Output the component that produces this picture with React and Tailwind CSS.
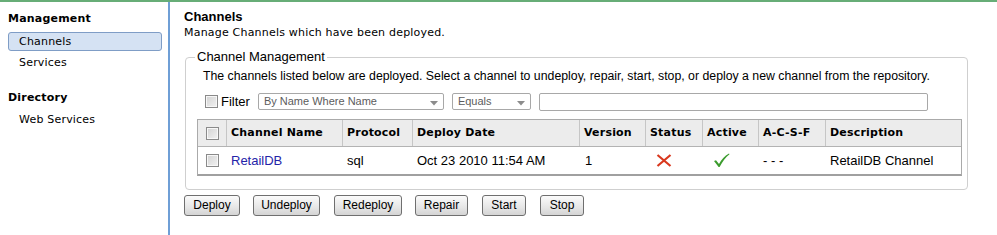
const arial = "font-['Liberation_Sans',Arial,sans-serif]";
const verdana = "font-['DejaVu_Sans',Verdana,sans-serif] tracking-[0.2px]";

function Check({ className = "" }) {
  return (
    <span
      className={
        "inline-block w-[13px] h-[13px] border border-[#8a8a8a] bg-[linear-gradient(135deg,#d2d2d2,#f2f2f2)] shadow-[inset_0_0_0_1px_#f7f7f7] " +
        className
      }
    />
  );
}

function Select({ text, w }) {
  return (
    <div
      className={`h-[17px] border border-[#a8a8a8] rounded-[2px] bg-white flex items-center justify-between pl-[5px] pr-[5px] text-[11px] text-[#5c5c5c] ${arial} ${w}`}
    >
      <span className="leading-[15px]">{text}</span>
      <svg width="8" height="5" viewBox="0 0 8 5" className="mt-[3px]">
        <path d="M0 0 L8 0 L4 4.5 Z" fill="#8c8c8c" />
      </svg>
    </div>
  );
}

const cols = [
  { w: "w-[29px]", label: null },
  { w: "w-[116px]", label: "Channel Name" },
  { w: "w-[70px]", label: "Protocol" },
  { w: "w-[167px]", label: "Deploy Date" },
  { w: "w-[66px]", label: "Version" },
  { w: "w-[57px]", label: "Status" },
  { w: "w-[56px]", label: "Active" },
  { w: "w-[67px]", label: "A-C-S-F" },
  { w: "w-[135px]", label: "Description" },
];

function Btn({ label, cls }) {
  return (
    <button
      className={`h-[21px] border border-[#6f6f6f] rounded-[3px] bg-[linear-gradient(#fbfbfb,#e6e6e6_60%,#d4d4d4)] text-[12px] text-black leading-[19px] text-center ${arial} ${cls}`}
    >
      {label}
    </button>
  );
}

export default function App() {
  return (
    <div className="w-[997px] h-[235px] bg-white overflow-hidden flex flex-col text-black">
      <div className="h-[2px] bg-[#67ad77] shrink-0" />
      <div className="flex flex-1 min-h-0">
        <aside className={`w-[168px] shrink-0 text-[11px] ${verdana}`}>
          <div className="pl-[8px] font-bold leading-[14px] mt-[10px]">Management</div>
          <div className="ml-[8px] mt-[6px] w-[154px] h-[19px] bg-[#d5e2f3] border border-[#7f9dc6] rounded-[3px] pl-[10px] leading-[17px]">
            Channels
          </div>
          <div className="pl-[19px] leading-[14px] mt-[5px]">Services</div>
          <div className="pl-[8px] font-bold leading-[14px] mt-[21px]">Directory</div>
          <div className="pl-[19px] leading-[14px] mt-[8px]">Web Services</div>
        </aside>
        <main className="flex-1 border-l-2 border-[#6f9fd6] pl-[14px]">
          <div className={`pt-[7px] text-[13px] font-bold leading-[16px] ${arial}`}>Channels</div>
          <div className={`text-[11px] leading-[15px] ${verdana}`}>
            Manage Channels which have been deployed.
          </div>
          <fieldset className="mt-[9px] ml-px w-[783px] border border-[#cfcfcf] rounded-[4px] pl-[11px] pr-[4px] pb-[13px]">
            <legend className={`-ml-[2px] px-[2px] text-[13px] leading-[16px] ${arial}`}>
              Channel Management
            </legend>
            <div className={`pt-[3px] pl-[6px] text-[12.3px] leading-[16px] whitespace-nowrap ${arial}`}>
              The channels listed below are deployed. Select a channel to undeploy, repair, start, stop, or deploy a new channel from the repository.
            </div>
            <div className="mt-[9px] h-[17px] flex items-center pl-[8px]">
              <Check />
              <span className={`ml-[3px] text-[13px] leading-[16px] ${arial}`}>Filter</span>
              <div className="ml-[8px]">
                <Select text="By Name Where Name" w="w-[186px]" />
              </div>
              <div className="ml-[8px]">
                <Select text="Equals" w="w-[79px]" />
              </div>
              <div className="ml-[8px] w-[389px] h-[18px] border border-[#a8a8a8] rounded-[2px] bg-white" />
            </div>
            <div className="mt-[9px] w-[765px] border border-[#aaaaaa] border-b-2 border-b-[#a0a0a0]">
              <div className={`flex h-[27px] bg-[#ececec] border-b border-[#b3b3b3] text-[11px] font-bold ${verdana}`}>
                {cols.map((c, i) => (
                  <div
                    key={i}
                    className={`${c.w} shrink-0 flex items-center ${i < cols.length - 1 ? "border-r border-[#c6c6c6]" : ""} ${i === 0 ? "pl-[8px]" : "pl-[4px]"}`}
                  >
                    {c.label ? c.label : <Check />}
                  </div>
                ))}
              </div>
              <div className={`flex h-[27px] text-[13px] ${arial}`}>
                <div className="w-[29px] shrink-0 flex items-center pl-[8px] border-r border-transparent">
                  <Check />
                </div>
                <div className="w-[116px] shrink-0 flex items-center pl-[4px] border-r border-transparent text-[#2424a8]">
                  RetailDB
                </div>
                <div className="w-[70px] shrink-0 flex items-center pl-[4px] border-r border-transparent">sql</div>
                <div className="w-[167px] shrink-0 flex items-center pl-[4px] border-r border-transparent">
                  Oct 23 2010 11:54 AM
                </div>
                <div className="w-[66px] shrink-0 flex items-center pl-[5px] border-r border-transparent">1</div>
                <div className="w-[57px] shrink-0 flex items-center pl-[10px] border-r border-transparent">
                  <svg width="16" height="13" viewBox="0 0 16 13">
                    <path d="M1.5 1 L14.5 12 M14.5 1 L1.5 12" stroke="#d9381e" strokeWidth="2.2" strokeLinecap="butt" fill="none" />
                  </svg>
                </div>
                <div className="w-[56px] shrink-0 flex items-center pl-[10px] border-r border-transparent">
                  <svg width="17" height="15" viewBox="0 0 17 15">
                    <path d="M1 8 L3 7.2 L6 11 C8.5 6.5 11.5 3 16 0.5 L16.5 1.2 C12.5 4.2 9.5 8.5 6.6 14 L5.6 14 Z" fill="#3c9c2e" />
                  </svg>
                </div>
                <div className="w-[67px] shrink-0 flex items-center pl-[4px] border-r border-transparent">- - -</div>
                <div className="w-[135px] shrink-0 flex items-center pl-[4px]">RetailDB Channel</div>
              </div>
            </div>
          </fieldset>
          <div className="mt-[5px] flex">
            <Btn label="Deploy" cls="w-[56px]" />
            <Btn label="Undeploy" cls="w-[67px] ml-[13px]" />
            <Btn label="Redeploy" cls="w-[68px] ml-[14px]" />
            <Btn label="Repair" cls="w-[53px] ml-[13px]" />
            <Btn label="Start" cls="w-[44px] ml-[14px]" />
            <Btn label="Stop" cls="w-[44px] ml-[14px]" />
          </div>
        </main>
      </div>
    </div>
  );
}
